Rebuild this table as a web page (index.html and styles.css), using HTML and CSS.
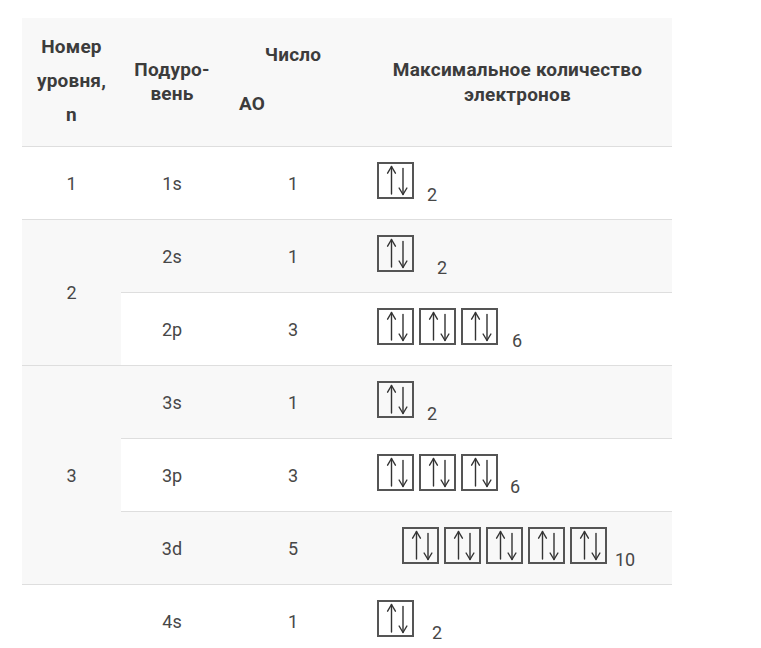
FILE: index.html
```html
<!DOCTYPE html>
<html lang="ru">
<head>
<meta charset="utf-8">
<title>Электронные уровни</title>
<link rel="stylesheet" href="styles.css">
</head>
<body>
<svg width="0" height="0" class="defs">
  <defs>
    <symbol id="pair" viewBox="0 0 33 33">
      <g fill="none" stroke="#333" stroke-width="1.4" stroke-linecap="round" stroke-linejoin="round">
        <line x1="12.5" y1="2.5" x2="12.5" y2="30"/>
        <polyline points="8.6,9.2 12.5,2.5 16.4,9.2"/>
        <line x1="24" y1="4.5" x2="24" y2="30.5"/>
        <polyline points="20.1,24 24,30.5 27.9,24"/>
      </g>
    </symbol>
  </defs>
</svg>
<div class="table">
  <div class="cell head grey">
    <div class="stack tall"><span>Номер</span><span>уровня,</span><span>n</span></div>
  </div>
  <div class="cell head grey">
    <div class="stack"><span>Подуро-</span><span>вень</span></div>
  </div>
  <div class="cell head grey ao-cell">
    <div class="ao"><span class="ao-top">Число</span><span class="ao-bot">АО</span></div>
  </div>
  <div class="cell head grey">
    <div class="stack wide"><span>Максимальное количество</span><span>электронов</span></div>
  </div>

  <!-- 1 -->
  <div class="cell">1</div>
  <div class="cell">1s</div>
  <div class="cell">1</div>
  <div class="cell orb-cell"><div class="orb"><span class="box"><svg><use href="#pair"/></svg></span><span class="cnt g13">2</span></div></div>

  <!-- 2 -->
  <div class="cell grey span2">2</div>
  <div class="cell grey">2s</div>
  <div class="cell grey">1</div>
  <div class="cell grey orb-cell"><div class="orb"><span class="box"><svg><use href="#pair"/></svg></span><span class="cnt g23">2</span></div></div>

  <div class="cell">2p</div>
  <div class="cell">3</div>
  <div class="cell orb-cell"><div class="orb"><span class="box"><svg><use href="#pair"/></svg></span><span class="box"><svg><use href="#pair"/></svg></span><span class="box"><svg><use href="#pair"/></svg></span><span class="cnt g14">6</span></div></div>

  <!-- 3 -->
  <div class="cell grey span3">3</div>
  <div class="cell grey">3s</div>
  <div class="cell grey">1</div>
  <div class="cell grey orb-cell"><div class="orb"><span class="box"><svg><use href="#pair"/></svg></span><span class="cnt g13">2</span></div></div>

  <div class="cell">3p</div>
  <div class="cell">3</div>
  <div class="cell orb-cell"><div class="orb"><span class="box"><svg><use href="#pair"/></svg></span><span class="box"><svg><use href="#pair"/></svg></span><span class="box"><svg><use href="#pair"/></svg></span><span class="cnt g12">6</span></div></div>

  <div class="cell grey">3d</div>
  <div class="cell grey">5</div>
  <div class="cell grey orb-cell"><div class="orb shifted"><span class="box"><svg><use href="#pair"/></svg></span><span class="box"><svg><use href="#pair"/></svg></span><span class="box"><svg><use href="#pair"/></svg></span><span class="box"><svg><use href="#pair"/></svg></span><span class="box"><svg><use href="#pair"/></svg></span><span class="cnt g8">10</span></div></div>

  <!-- 4 -->
  <div class="cell"></div>
  <div class="cell">4s</div>
  <div class="cell">1</div>
  <div class="cell orb-cell"><div class="orb"><span class="box"><svg><use href="#pair"/></svg></span><span class="cnt g18">2</span></div></div>
</div>
</body>
</html>
```

FILE: styles.css
```css
html, body {
  margin: 0;
  padding: 0;
  background: #fff;
}

body {
  font-family: Roboto, "Liberation Sans", sans-serif;
  color: #474747;
}

.defs {
  position: absolute;
}

.table {
  margin: 18px 0 0 22px;
  width: 650px;
  display: grid;
  grid-template-columns: 99px 102px 140px 309px;
  grid-template-rows: 128px;
  grid-auto-rows: 73px;
}

.cell {
  box-sizing: border-box;
  border-top: 1px solid #dedede;
  display: flex;
  align-items: center;
  justify-content: center;
  font-size: 18px;
  background: #fff;
}

.cell.grey {
  background: #f8f8f8;
}

.span2 {
  grid-row: span 2;
}

.span3 {
  grid-row: span 3;
}

.head {
  border-top: none;
  font-weight: 700;
  font-size: 19px;
  letter-spacing: 0.2px;
  color: #3c3c3c;
  text-align: center;
}

.stack {
  display: flex;
  flex-direction: column;
  align-items: center;
  line-height: 24px;
}

.stack.tall {
  line-height: 34px;
  margin-top: -2px;
}

.stack.wide {
  line-height: 25px;
  margin-bottom: 1px;
}

.ao-cell {
  padding: 0 16px;
  justify-content: stretch;
}

.ao {
  width: 100%;
  display: flex;
  flex-direction: column;
  line-height: 24px;
  margin-bottom: 6px;
}

.ao-top {
  text-align: center;
}

.ao-bot {
  margin-top: 25px;
  text-align: left;
}

.orb-cell {
  justify-content: flex-start;
  padding-left: 14px;
}

.orb {
  display: flex;
  align-items: flex-end;
  gap: 5px;
  margin-bottom: 6px;
}

.orb.shifted {
  margin-left: 25px;
}

.box {
  box-sizing: border-box;
  width: 37px;
  height: 37px;
  border: 2px solid #555;
  display: block;
}

.box svg {
  display: block;
  width: 33px;
  height: 33px;
}

.cnt {
  display: block;
  line-height: 18px;
  margin-bottom: -5px;
  color: #474747;
}

.g8 { margin-left: 3px; }
.g12 { margin-left: 7px; }
.g13 { margin-left: 8px; }
.g14 { margin-left: 9px; }
.g18 { margin-left: 13px; }
.g23 { margin-left: 18px; }
```
